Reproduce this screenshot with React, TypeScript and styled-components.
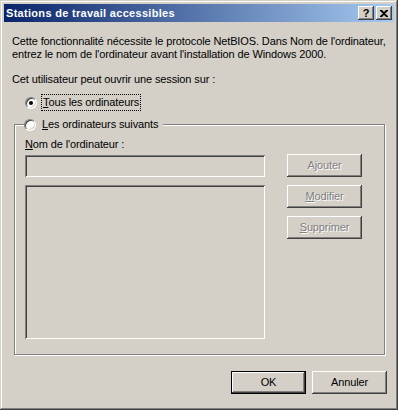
import React from "react";
import styled, { createGlobalStyle } from "styled-components";

const Global = createGlobalStyle`
  html, body { margin: 0; padding: 0; background: #d4d0c8; }
  body { font-family: "Liberation Sans", Arial, sans-serif; font-size: 11px; }
`;

const FACE = "#d4d0c8";

const Window = styled.div`
  width: 398px;
  height: 410px;
  box-sizing: border-box;
  padding: 4px;
  background: ${FACE};
  box-shadow: inset -1px -1px 0 #404040, inset 1px 1px 0 ${FACE},
    inset -2px -2px 0 #808080, inset 2px 2px 0 #ffffff;
  display: flex;
  flex-direction: column;
  color: #000;
  font-family: "Liberation Sans", Arial, sans-serif;
  font-size: 11px;
  letter-spacing: -0.12px;
`;

const TitleBar = styled.div`
  height: 18px;
  display: flex;
  align-items: center;
  padding: 0 2px 0 2px;
  background: linear-gradient(to right, #0a246a, #a6caf0);
`;

const Title = styled.div`
  flex: 1;
  color: #fff;
  font-weight: bold;
  font-size: 11px;
  letter-spacing: 0.3px;
  white-space: nowrap;
`;

const CapButtons = styled.div`
  display: flex;
  gap: 2px;
`;

const CapButton = styled.div`
  width: 16px;
  height: 14px;
  box-sizing: border-box;
  background: ${FACE};
  box-shadow: inset -1px -1px 0 #404040, inset 1px 1px 0 #ffffff,
    inset -2px -2px 0 #808080;
  display: flex;
  align-items: center;
  justify-content: center;
  font-weight: bold;
  font-size: 11px;
  line-height: 14px;
`;

const Content = styled.div`
  flex: 1;
  display: flex;
  flex-direction: column;
  padding: 13px 7px 0 8px;
`;

const Para = styled.p<{ $mt?: number }>`
  margin: ${(p) => p.$mt ?? 0}px 0 0 0;
  line-height: 13px;
  white-space: nowrap;
`;

const RadioRow = styled.div<{ $mt?: number }>`
  margin-top: ${(p) => p.$mt ?? 0}px;
  height: 17px;
  display: flex;
  align-items: center;
  padding-left: 13px;
`;

const Radio = styled.span<{ $checked?: boolean }>`
  width: 12px;
  height: 12px;
  box-sizing: border-box;
  border-radius: 50%;
  border: 1px solid;
  border-color: #808080 #ffffff #ffffff #808080;
  background: #fff;
  box-shadow: inset 1px 1px 0 #404040, inset -1px -1px 0 ${FACE};
  display: flex;
  align-items: center;
  justify-content: center;
  flex: none;
  &::after {
    content: "";
    width: 4px;
    height: 4px;
    border-radius: 50%;
    background: #000;
    display: ${(p) => (p.$checked ? "block" : "none")};
  }
`;

const RadioLabel = styled.span<{ $focus?: boolean }>`
  margin-left: 4px;
  padding: 1px 1px;
  line-height: 13px;
  border: 1px dotted ${(p) => (p.$focus ? "#000" : "transparent")};
  white-space: nowrap;
`;

const Group = styled.div`
  position: relative;
  margin: 13px 0 0 2px;
  width: 371px;
  height: 231px;
  box-sizing: border-box;
  border: 1px solid #808080;
  box-shadow: inset 1px 1px 0 #ffffff, 1px 1px 0 #ffffff;
  padding: 13px 0 0 10px;
  display: flex;
  gap: 22px;
`;

const Legend = styled.div`
  position: absolute;
  top: -9px;
  left: 9px;
  height: 17px;
  display: flex;
  align-items: center;
  background: ${FACE};
  padding-right: 3px;
`;

const LeftCol = styled.div`
  width: 240px;
  display: flex;
  flex-direction: column;
`;

const Label = styled.div`
  line-height: 13px;
  white-space: nowrap;
`;

const Sunken = styled.div<{ $h: number; $mt: number }>`
  margin-top: ${(p) => p.$mt}px;
  height: ${(p) => p.$h}px;
  box-sizing: border-box;
  background: ${FACE};
  box-shadow: inset 1px 1px 0 #808080, inset -1px -1px 0 #ffffff,
    inset 2px 2px 0 #404040, inset -2px -2px 0 ${FACE};
`;

const ButtonCol = styled.div`
  margin-top: 16px;
  display: flex;
  flex-direction: column;
  gap: 8px;
`;

const Button = styled.div<{ $disabled?: boolean; $default?: boolean }>`
  width: 75px;
  height: 23px;
  box-sizing: border-box;
  background: ${FACE};
  display: flex;
  align-items: center;
  justify-content: center;
  line-height: 13px;
  color: ${(p) => (p.$disabled ? "#808080" : "#000")};
  text-shadow: ${(p) => (p.$disabled ? "1px 1px 0 #ffffff" : "none")};
  border: ${(p) => (p.$default ? "1px solid #000" : "none")};
  box-shadow: inset -1px -1px 0 #404040, inset 1px 1px 0 #ffffff,
    inset -2px -2px 0 #808080;
`;

const U = styled.span`
  text-decoration: underline;
`;

const Footer = styled.div`
  margin-top: 16px;
  display: flex;
  justify-content: flex-end;
  gap: 6px;
`;

export default function App() {
  return (
    <>
      <Global />
      <Window>
        <TitleBar>
          <Title>Stations de travail accessibles</Title>
          <CapButtons>
            <CapButton>?</CapButton>
            <CapButton>
              <svg width="8" height="7" viewBox="0 0 8 7">
                <path d="M0 0h2l2 2 2-2h2v1L5 3.5 8 6v1H6L4 5 2 7H0V6l3-2.5L0 1z" fill="#000" />
              </svg>
            </CapButton>
          </CapButtons>
        </TitleBar>
        <Content>
          <Para>
            Cette fonctionnalité nécessite le protocole NetBIOS. Dans Nom de l'ordinateur,
            <br />
            entrez le nom de l'ordinateur avant l'installation de Windows 2000.
          </Para>
          <Para $mt={12}>Cet utilisateur peut ouvrir une session sur :</Para>
          <RadioRow $mt={8}>
            <Radio $checked />
            <RadioLabel $focus>
              <U>T</U>ous les ordinateurs
            </RadioLabel>
          </RadioRow>
          <Group>
            <Legend>
              <Radio />
              <RadioLabel>
                <U>L</U>es ordinateurs suivants
              </RadioLabel>
            </Legend>
            <LeftCol>
              <Label>
                <U>N</U>om de l'ordinateur :
              </Label>
              <Sunken $mt={4} $h={22} />
              <Sunken $mt={8} $h={154} />
            </LeftCol>
            <ButtonCol>
              <Button $disabled>
                A<U>j</U>outer
              </Button>
              <Button $disabled>
                <U>M</U>odifier
              </Button>
              <Button $disabled>
                <U>S</U>upprimer
              </Button>
            </ButtonCol>
          </Group>
          <Footer>
            <Button $default>OK</Button>
            <Button>Annuler</Button>
          </Footer>
        </Content>
      </Window>
    </>
  );
}
